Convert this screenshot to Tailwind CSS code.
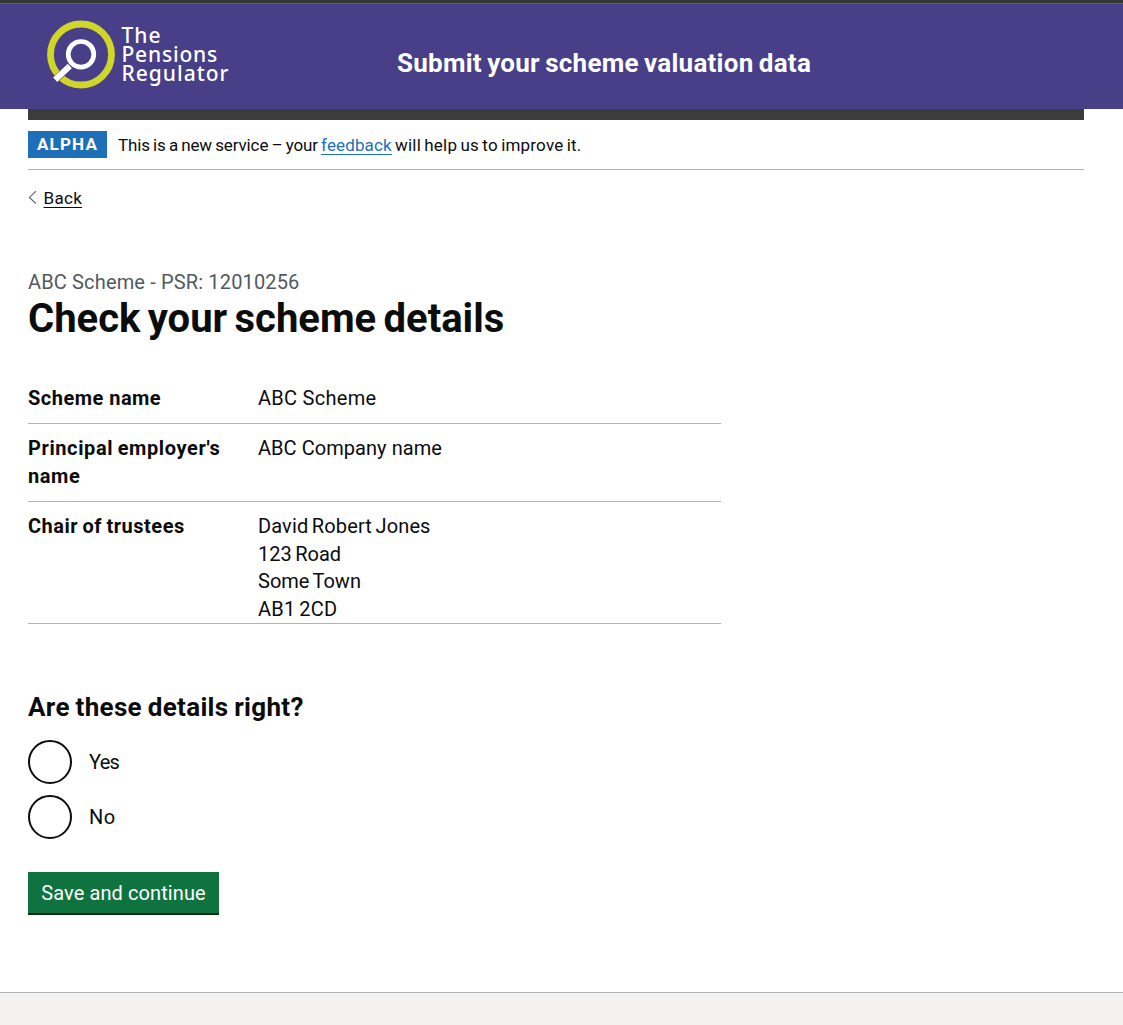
<!DOCTYPE html>
<html lang="en">
<head>
<meta charset="utf-8">
<title>Check your scheme details</title>
<script src="https://cdn.jsdelivr.net/npm/@tailwindcss/browser@4"></script>
</head>
<body class="flex h-[1025px] flex-col overflow-hidden bg-white font-[Roboto,sans-serif] text-[#0b0c0c]">
<header class="flex h-[109px] shrink-0 items-start border-t-3 border-[#363636] bg-[#483f88]">
  <div class="flex h-full w-full border-t border-[#635f78]">
    <div class="flex w-[397px] pl-[46px] pt-4">
      <svg class="h-[70px] w-[70px] shrink-0" viewBox="0 0 70 70" fill="none">
        <circle cx="35" cy="34.5" r="30.5" stroke="#cfd628" stroke-width="6.8"/>
        <path d="M8.8 60.2 23.6 46.2" stroke="#483f88" stroke-width="7"/>
        <circle cx="35" cy="34.3" r="12.8" stroke="#fff" stroke-width="4.7"/>
        <path d="M9.2 59.8 23.8 46" stroke="#fff" stroke-width="6"/>
      </svg>
      <div class="pl-[5.5px] pt-[5.5px] font-['Noto_Sans',sans-serif] text-[21px] font-medium leading-[19.4px] text-white">
        <div><span class="tracking-[1px]">The</span></div>
        <div><span class="tracking-[0.8px]">Pensions</span></div>
        <div><span class="tracking-[1px]">Regulator</span></div>
      </div>
    </div>
    <div class="pt-[43px] text-[26px] font-bold leading-8 text-white"><span class="tracking-[0.25px] [word-spacing:-1.4px]">Submit your scheme valuation data</span></div>
  </div>
</header>
<main class="flex flex-1 flex-col pl-7 pr-[39px]">
  <div class="h-[11px] shrink-0 bg-[#3c3c3c]"></div>
  <div class="flex h-[50px] shrink-0 items-start border-b border-[#b1b4b6] pt-[11px]">
    <strong class="flex h-[27px] w-[79px] items-center justify-center bg-[#1d70b8] text-[17px] font-bold leading-none text-white"><span class="tracking-[1.2px]">ALPHA</span></strong>
    <p class="pl-[11px] text-[17px] leading-[28px]"><span class="tracking-[-0.13px] [word-spacing:-0.9px]">This is a new service – your </span><a class="tracking-[0.12px] text-[#1d70b8] underline decoration-1 underline-offset-[3px]">feedback</a><span class="tracking-[0.2px] [word-spacing:-1.1px]"> will help us to improve it.</span></p>
  </div>
  <a class="mt-[16px] flex h-6 items-center text-[17px] leading-6">
    <svg class="mr-[6.5px] h-[14px] w-[9px]" viewBox="0 0 9 14" fill="none"><path d="M8 .2 1.4 6.4 8 12.6" stroke="#505a5f" stroke-width="1.1"/></svg>
    <span class="tracking-[0.3px] underline decoration-1 underline-offset-[3px]">Back</span>
  </a>
  <div class="mt-[58px] text-[20px] leading-7 text-[#505a5f]"><span class="tracking-[0.15px]">ABC Scheme - PSR: 12010256</span></div>
  <h1 class="text-[40px] font-bold leading-[46px]"><span class="[word-spacing:-2.6px]">Check your scheme details</span></h1>
  <dl class="mt-[42px] w-[693px] text-[20px] leading-[27.5px]">
    <div class="flex h-[40px] border-b border-[#b1b4b6] pt-px"><dt class="w-[230px] font-bold"><span class="tracking-[0.48px]">Scheme name</span></dt><dd class="tracking-[0.28px]">ABC Scheme</dd></div>
    <div class="flex h-[78px] border-b border-[#b1b4b6] pt-[11px]"><dt class="w-[230px] font-bold"><span class="tracking-[0.6px] [word-spacing:-1px]">Principal employer's<br>name</span></dt><dd class="tracking-[0.05px]">ABC Company name</dd></div>
    <div class="flex h-[122px] border-b border-[#b1b4b6] pt-[11px]"><dt class="w-[230px] font-bold"><span class="tracking-[0.5px] [word-spacing:-1px]">Chair of trustees</span></dt><dd class="[word-spacing:-1.5px]"><span class="tracking-[0.12px]">David Robert Jones</span><br>123 Road<br>Some Town<br><span class="tracking-[0.25px]">AB1 2CD</span></dd></div>
  </dl>
  <h2 class="mt-[67px] text-[26px] font-bold leading-8"><span class="tracking-[0.32px] [word-spacing:-1px]">Are these details right?</span></h2>
  <div class="mt-[17px] flex flex-col gap-[11px] text-[20px]">
    <label class="flex h-11 items-center gap-[17px]"><span class="h-11 w-11 rounded-full border-2 border-[#0b0c0c]"></span><span class="tracking-[-0.7px]">Yes</span></label>
    <label class="flex h-11 items-center gap-[17px]"><span class="h-11 w-11 rounded-full border-2 border-[#0b0c0c]"></span><span class="tracking-[0.6px]">No</span></label>
  </div>
  <button class="mt-[33px] h-[43px] w-[191px] border-b-2 border-[#002d18] bg-[#0f7340] text-[20px] text-white"><span class="tracking-[0.1px]">Save and continue</span></button>
</main>
<footer class="h-[33px] shrink-0 border-t border-[#b1b4b6] bg-[#f3f2f1]"></footer>
</body>
</html>
